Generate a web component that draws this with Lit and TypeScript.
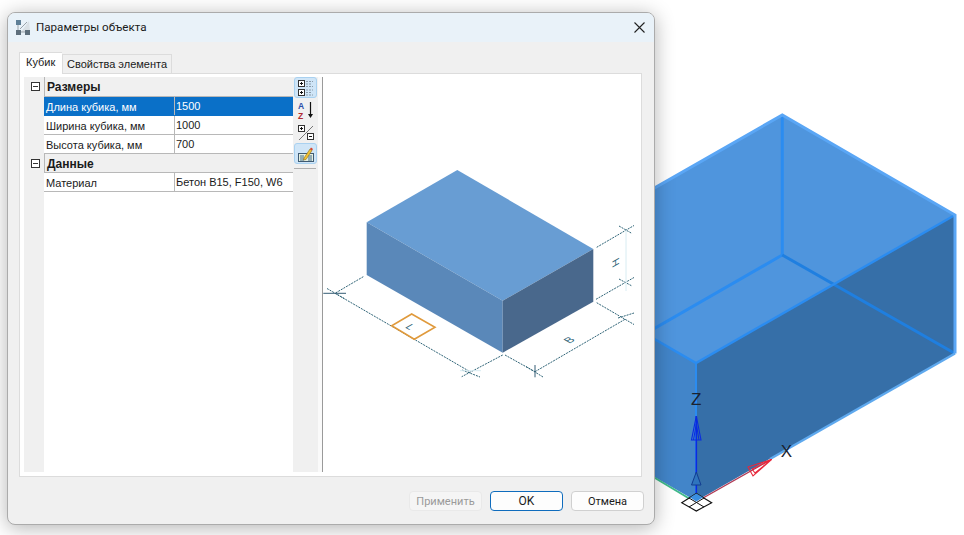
import { LitElement, html, css, svg } from 'lit';
import { customElement } from 'lit/decorators.js';

const rows = [
  { group: 'Размеры', first: true },
  { name: 'Длина кубика, мм', value: '1500', selected: true },
  { name: 'Ширина кубика, мм', value: '1000' },
  { name: 'Высота кубика, мм', value: '700' },
  { group: 'Данные' },
  { name: 'Материал', value: 'Бетон В15, F150, W6' },
];

// the big box that sits behind the dialog
const modelSpace = svg`
  <svg class="scene" width="964" height="535" viewBox="0 0 964 535">
    <polygon points="523,263 782,115 955,215 696,363" fill="#4f95dd" />
    <polygon points="523,263 696,363 696,501 523,401" fill="#4285c9" />
    <polygon points="696,363 955,215 955,353 696,501" fill="#366fa8" />
    <g fill="none" stroke="#2b8cf0" stroke-width="3">
      <path d="M782.3 115V255L523 404" />
      <path d="M782.3 255L955 353.5" stroke="#1f7fe0" />
      <path d="M523 263L696 363L955 215" stroke-width="2.4" />
    </g>
    <path d="M523 263L782.3 115L955 215V353.5" fill="none" stroke="#5aa6f5" stroke-width="3" />
    <path d="M955 353.5L770 459" fill="none" stroke="#5fa9ee" stroke-width="2.4" />
    <path d="M696 363V495" fill="none" stroke="#2b8cf0" stroke-width="2" />
    <path d="M640 469L690 499" fill="none" stroke="#3fb98a" stroke-width="2" />
    <path d="M696 502L771 459.5" fill="none" stroke="#b03a55" stroke-width="1.4" />
    <path d="M771.5 459.5L748 467L753 476ZM771.5 459.5L752 469L755 473Z" fill="none" stroke="#e8283c" stroke-width="1.1" />
    <path d="M696.3 503V416" fill="none" stroke="#0a2be0" stroke-width="1.6" />
    <path d="M696.3 416L691.5 440H701ZM696.3 424L693.5 440M696.3 424L699 440" fill="none" stroke="#0a2be0" stroke-width="1.1" />
    <path d="M696.3 472L691.5 485H701Z" fill="#2f74bd" stroke="#123d90" stroke-width="1" />
    <polygon points="681.7,502.7 696.3,493.5 711.7,502.7 696.3,511" fill="#fff" stroke="#111" stroke-width="1.1" />
    <polygon points="690,497.5 696.3,493.5 703,497.5 696.3,501.5" fill="#3a8fe0" />
    <path d="M689 498L704 507M704 498L689 507" stroke="#111" stroke-width="1" fill="none" />
    <text class="axis" x="696.3" y="405" text-anchor="middle">Z</text>
    <text class="axis" x="786.5" y="456.5" text-anchor="middle">X</text>
  </svg>
`;

const preview = svg`
  <svg width="315" height="395" viewBox="323 77 315 395">
    <polygon points="457.3,170 593.3,249 502.7,300.7 366.7,222.3" fill="#689dd3" />
    <polygon points="366.7,222.3 502.7,300.7 502.7,352.7 366.7,275" fill="#5a88b9" />
    <polygon points="502.7,300.7 593.3,249 593.3,301.7 502.7,352.7" fill="#49688c" />
    <g fill="none" stroke="#2f6477" stroke-width="1" stroke-dasharray="2 1">
      <path d="M363.3 276.7L335 293.3M335 293.3L470 371.7" />
      <path d="M327 288.5L345 299" />
      <path d="M502.7 355L461.7 376.7M462 370L480 377" />
      <path d="M505 355L535 371.7M535 371.7L625 319.3" />
      <path d="M526 366.5L543 377M596.7 302.7L634 324.5" />
      <path d="M596 299.3L634 277.5M618 318L634 313" />
      <path d="M596.7 247.3L634 225.5M619 226L632 233.5M619 279L632 286" />
    </g>
    <path d="M323.3 293.3H346M535 365V377.3" fill="none" stroke="#355d75" stroke-width="1" />
    <path d="M626 230V291M460 370.7H481" fill="none" stroke="#d8ecf2" stroke-width="1" />
    <polygon points="411.7,314 435,327.3 414.3,339.3 391.7,325.7" fill="none" stroke="#e09a3c" stroke-width="1.6" />
    <text class="dim" transform="matrix(.87 .5 -.87 .5 407.2 328.7)" text-anchor="middle">L</text>
    <text class="dim" transform="matrix(.87 -.5 .87 .5 572.5 342)" text-anchor="middle">B</text>
    <text class="dim" transform="matrix(0 -1 .87 -.5 618.5 260.7)" text-anchor="middle">H</text>
  </svg>
`;

@customElement('app-root')
export class AppRoot extends LitElement {
  static styles = css`
    :host {
      display: block;
      position: relative;
      width: 964px;
      height: 535px;
      overflow: hidden;
      background: #fff;
      font-family: 'Liberation Sans', sans-serif;
      font-size: 11px;
      color: #1a1a1a;
    }
    .scene {
      position: absolute;
      left: 0;
      top: 0;
    }
    .axis {
      font: 17px 'Liberation Sans', sans-serif;
      fill: #1a2230;
    }
    .dialog {
      position: absolute;
      left: 7px;
      top: 12px;
      width: 648px;
      height: 513px;
      box-sizing: border-box;
      display: flex;
      flex-direction: column;
      background: #f0f0f0;
      border: 1px solid #ababab;
      border-radius: 8px;
      box-shadow: 0 3px 20px rgba(0, 0, 0, 0.3);
      overflow: hidden;
    }
    .title {
      flex: none;
      height: 29px;
      box-sizing: border-box;
      display: flex;
      align-items: center;
      gap: 4px;
      padding: 0 9px 1px 7px;
      background: #e9f2f9;
      font: 11.6px Roboto, sans-serif;
    }
    .title svg {
      flex: none;
    }
    .title .close {
      margin-left: auto;
    }
    .body {
      flex: 1;
      display: flex;
      flex-direction: column;
      padding: 10px 12px 0 11px;
      min-height: 0;
    }
    .tabs {
      flex: none;
      display: flex;
      align-items: flex-end;
      height: 21px;
      position: relative;
      z-index: 1;
    }
    .tab {
      height: 18px;
      line-height: 19px;
      padding: 0 4px;
      font-size: 11px;
      background: #f0f0f0;
      border: 1px solid #dcdcdc;
      border-bottom: none;
    }
    .tab.active {
      height: 21px;
      line-height: 19px;
      background: #fff;
      margin-bottom: -1px;
      padding: 0 6px;
      border-right: none;
      width: 30px;
    }
    .panel {
      height: 404px;
      flex: none;
      box-sizing: border-box;
      display: flex;
      background: #fff;
      border: 1px solid #dcdcdc;
      padding: 3px 4px 4px 4px;
    }
    .grid {
      flex: none;
      width: 249px;
      background: #f0f0f0;
      display: flex;
      flex-direction: column;
      padding-left: 20px;
    }
    .rows {
      flex: 1;
      background: #fff;
    }
    .row {
      display: grid;
      grid-template-columns: 130px 1fr;
      height: 19px;
      box-sizing: border-box;
      border-bottom: 1px solid #b8b8b8;
      line-height: 20px;
    }
    .row .cell {
      padding-left: 2px;
      white-space: nowrap;
      overflow: hidden;
    }
    .row .cell + .cell {
      border-left: 1px solid #b8b8b8;
      padding-left: 1px;
      line-height: 18px;
    }
    .row.selected {
      background: #0a70c8;
      color: #fff;
      border-bottom-color: #0a70c8;
    }
    .row.group {
      display: block;
      background: #f0f0f0;
      font-weight: 700;
      font-size: 12px;
      padding-left: 2px;
      border-left: 1px solid #b8b8b8;
      position: relative;
    }
    .row.group.first {
      height: 20px;
    }
    .toggle {
      position: absolute;
      left: -14px;
      top: 5px;
      width: 9px;
      height: 9px;
      box-sizing: border-box;
      border: 1px solid #333;
      background: #fff;
    }
    .toggle::after {
      content: '';
      position: absolute;
      left: 1px;
      right: 1px;
      top: 3px;
      height: 1px;
      background: #333;
    }
    .tools {
      flex: none;
      width: 25px;
      box-sizing: border-box;
      background: #f0f0f0;
      display: flex;
      flex-direction: column;
      padding-left: 1px;
    }
    .tool {
      width: 23px;
      height: 21px;
      box-sizing: border-box;
      display: flex;
      align-items: center;
      justify-content: center;
      border: 1px solid transparent;
      border-radius: 3px;
      margin-bottom: 1px;
    }
    .tool.on {
      background: #cfe5f7;
      border-color: #a9d1f0;
    }
    .tool-sep {
      width: 22px;
      height: 1px;
      margin-top: 3px;
      background: #b0b0b0;
    }
    .split {
      flex: none;
      width: 5px;
      box-sizing: border-box;
      background: #fafafa;
      border-right: 1px solid #9a9a9a;
    }
    .preview {
      flex: 1;
      min-width: 0;
      overflow: hidden;
      background: #fff;
    }
    .dim {
      font: 11px 'Liberation Sans', sans-serif;
      fill: #2f6477;
    }
    .buttons {
      flex: none;
      display: flex;
      justify-content: flex-end;
      gap: 8px;
      padding-top: 14px;
      margin-right: -2px;
    }
    button {
      width: 73px;
      height: 20px;
      padding: 0;
      font: 11px Roboto, sans-serif;
      color: #1a1a1a;
      background: #fdfdfd;
      border: 1px solid #d0d0d0;
      border-radius: 4px;
    }
    button.primary {
      border: 1.5px solid #0f6cbd;
      font-size: 12px;
    }
    button:disabled {
      color: #9a9a9a;
      background: #f5f5f5;
      border-color: #e9e9e9;
    }
    .az {
      font: 700 8.5px 'Liberation Sans', sans-serif;
    }
  `;

  render() {
    return html`
      ${modelSpace}
      <div class="dialog">
        <div class="title">
          <svg width="17" height="17" viewBox="0 0 17 17">
            <path d="M14 2L6 13H15Z" fill="#d5dbe0" opacity=".8" />
            <path d="M3 3V13M12 3L5 10M3 13H13" stroke="#9aa3aa" stroke-width="1" fill="none" />
            <rect x="1" y="1" width="5" height="5" fill="#5e7f97" />
            <rect x="1" y="11" width="5" height="5" fill="#5e6f7c" />
            <rect x="10" y="11" width="5" height="5" fill="#5e6f7c" />
          </svg>
          <span>Параметры объекта</span>
          <svg class="close" width="11" height="11" viewBox="0 0 11 11">
            <path d="M.5 .5L10.5 10.5M10.5 .5L.5 10.5" stroke="#222" stroke-width="1.1" fill="none" />
          </svg>
        </div>
        <div class="body">
          <div class="tabs">
            <div class="tab active">Кубик</div>
            <div class="tab">Свойства элемента</div>
          </div>
          <div class="panel">
            <div class="grid">
              <div class="rows">
                ${rows.map((r) =>
                  r.group
                    ? html`<div class="row group ${r.first ? 'first' : ''}"><span class="toggle"></span>${r.group}</div>`
                    : html`<div class="row ${r.selected ? 'selected' : ''}">
                        <div class="cell">${r.name}</div>
                        <div class="cell">${r.value}</div>
                      </div>`
                )}
              </div>
            </div>
            <div class="tools">
              <div class="tool on">
                <svg width="18" height="18" viewBox="0 0 18 18">
                  <g fill="#fff" stroke="#333"><rect x="1.5" y="1.5" width="6" height="6" /><rect x="1.5" y="10.5" width="6" height="6" /></g>
                  <path d="M3 4.5H6M4.5 3V6M3 13.5H6M4.5 12V15" stroke="#111" />
                  <path d="M9 2.5H16M9 5H15M9 7.5H16M9 11H16M9 13.5H15M9 16H16" stroke="#8a9aa8" stroke-dasharray="2 1" />
                </svg>
              </div>
              <div class="tool">
                <svg width="18" height="20" viewBox="0 0 18 20">
                  <text x="1" y="9" class="az" fill="#2a4fa8">A</text>
                  <text x="1" y="19" class="az" fill="#b02a30">Z</text>
                  <path d="M13.5 2V15" stroke="#111" stroke-width="1.2" />
                  <path d="M11 14H16L13.5 18Z" fill="#111" />
                </svg>
              </div>
              <div class="tool">
                <svg width="18" height="18" viewBox="0 0 18 18">
                  <path d="M2 17L16 3" stroke="#777" />
                  <rect x="1.5" y="2.5" width="6" height="6" fill="#fff" stroke="#333" />
                  <path d="M3 5.5H6M4.5 4V7" stroke="#111" />
                  <rect x="10.5" y="10.5" width="6" height="6" fill="#fff" stroke="#333" />
                  <path d="M12 13.5H15" stroke="#111" />
                </svg>
              </div>
              <div class="tool on">
                <svg width="18" height="18" viewBox="0 0 18 18">
                  <rect x="1.5" y="8.5" width="15" height="8" fill="#e6efe0" stroke="#3f5a72" />
                  <path d="M3 11H7M3 13H7M3 15H7M11 11H15M11 13H15M11 15H15" stroke="#3f6a8a" />
                  <path d="M7 13L13 4L15 5.5L9 14.5L6.5 15Z" fill="#f2c232" stroke="#8a6a1a" stroke-width=".6" />
                  <path d="M13 4L14 2.5L16 4L15 5.5Z" fill="#d8402e" />
                </svg>
              </div>
              <div class="tool-sep"></div>
            </div>
            <div class="split"></div>
            <div class="preview">${preview}</div>
          </div>
          <div class="buttons">
            <button disabled>Применить</button>
            <button class="primary">OK</button>
            <button>Отмена</button>
          </div>
        </div>
      </div>
    `;
  }
}
